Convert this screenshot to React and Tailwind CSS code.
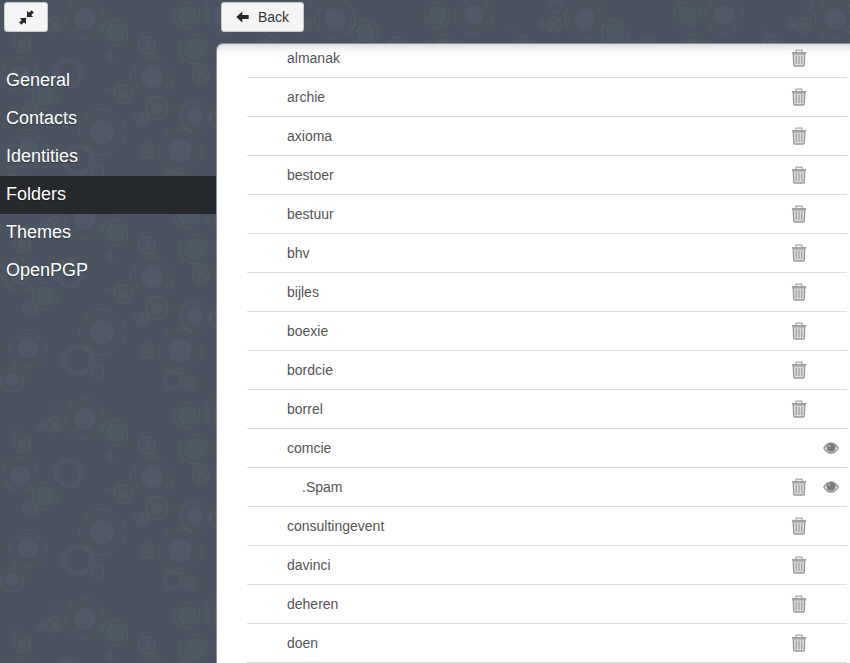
import React from "react";

const folders = [
  { name: "almanak", trash: true },
  { name: "archie", trash: true },
  { name: "axioma", trash: true },
  { name: "bestoer", trash: true },
  { name: "bestuur", trash: true },
  { name: "bhv", trash: true },
  { name: "bijles", trash: true },
  { name: "boexie", trash: true },
  { name: "bordcie", trash: true },
  { name: "borrel", trash: true },
  { name: "comcie", eye: true },
  { name: ".Spam", trash: true, eye: true, child: true },
  { name: "consultingevent", trash: true },
  { name: "davinci", trash: true },
  { name: "deheren", trash: true },
  { name: "doen", trash: true },
];

const nav = ["General", "Contacts", "Identities", "Folders", "Themes", "OpenPGP"];

// [x, y, r, kind] a = target rings with disc, b = thick hollow ring, c = dot, d = disc with ring
const circles = [
  [85, 19, 21, "a"], [115, 33, 14, "d"], [56, 6, 7, "b"], [54, 25, 8, "a"], [42, 25, 4, "c"],
  [14, 31, 4, "b"], [22, 44, 9, "a"], [20, 75, 19, "a"], [69, 73, 15, "b"], [46, 96, 14, "d"],
  [30, 109, 7, "a"], [28, 149, 20, "a"], [12, 179, 13, "a"], [102, 132, 24, "a"], [78, 160, 16, "b"],
  [98, 172, 7, "b"], [147, 45, 9, "a"], [110, 57, 4, "c"], [152, 77, 22, "a"], [123, 94, 10, "a"],
  [107, 90, 3, "c"], [157, 108, 12, "a"], [142, 119, 7, "a"], [195, 116, 16, "a"], [180, 151, 23, "a"],
  [147, 151, 8, "a"], [173, 180, 10, "b"], [190, 184, 7, "a"], [187, 15, 14, "d"], [194, 49, 16, "d"],
  [201, 74, 9, "a"], [224, 15, 20, "a"], [215, 120, 7, "b"],
];

function Circle({ x, y, r, kind }) {
  if (kind === "c") return <circle cx={x} cy={y} r={r} fill="#fff" fillOpacity="0.025" />;
  if (kind === "b")
    return <circle cx={x} cy={y} r={r * 0.84} fill="none" stroke="#fff" strokeOpacity="0.022" strokeWidth={r * 0.3} />;
  if (kind === "d")
    return (
      <g>
        <circle cx={x} cy={y} r={r * 0.68} fill="#fff" fillOpacity="0.028" />
        <circle cx={x} cy={y} r={r * 0.92} fill="none" stroke="#fff" strokeOpacity="0.028" strokeWidth={1.6} />
      </g>
    );
  return (
    <g>
      <circle cx={x} cy={y} r={r * 0.5} fill="#fff" fillOpacity="0.03" />
      <circle cx={x} cy={y} r={r * 0.78} fill="none" stroke="#fff" strokeOpacity="0.018" strokeWidth={1.2} />
      <circle cx={x} cy={y} r={r * 0.95} fill="none" stroke="#fff" strokeOpacity="0.028" strokeWidth={1.6} />
    </g>
  );
}

function Backdrop() {
  const shifts = [[0, 0], [0, 200], [0, -200], [250, 0], [-250, 0]];
  return (
    <svg className="absolute inset-0 w-full h-full" aria-hidden="true">
      <defs>
        <pattern id="tile" width="250" height="200" patternUnits="userSpaceOnUse">
          {shifts.map(([dx, dy]) => (
            <g key={`${dx}_${dy}`} transform={`translate(${dx} ${dy})`}>
              {circles.map(([x, y, r, kind], i) => (
                <Circle key={i} x={x} y={y} r={r} kind={kind} />
              ))}
            </g>
          ))}
        </pattern>
        <pattern id="weave" width="2" height="2" patternUnits="userSpaceOnUse">
          <rect width="1" height="2" fill="#000" fillOpacity="0.03" />
        </pattern>
      </defs>
      <rect width="100%" height="100%" fill="url(#tile)" />
      <rect width="100%" height="100%" fill="url(#weave)" />
    </svg>
  );
}

function Trash() {
  return (
    <svg width="16" height="18" viewBox="0 0 16 18" fill="none" aria-hidden="true">
      <path d="M0.800 3.800h14.400" stroke="#a0a0a0" strokeWidth="1.800" />
      <path d="M5 3V1.200h6V3" stroke="#a8a8a8" strokeWidth="1.200" />
      <path d="M2.200 4.800l.5 11c0 .7.500 1.200 1.100 1.200h8.400c.6 0 1.100-.5 1.100-1.200l.5-11z" fill="#dcdcdc" stroke="#999" strokeWidth="1.300" />
      <path d="M5.300 6.500v8.500M8 6.500v8.500M10.700 6.500v8.500" stroke="#a6a6a6" strokeWidth="1.400" />
    </svg>
  );
}

function Eye() {
  return (
    <svg width="16" height="12" viewBox="0 0 16 12" aria-hidden="true">
      <path d="M0 6c2-3.600 4.800-5.800 8-5.800S14 2.400 16 6c-2 3.600-4.800 5.800-8 5.800S2 9.600 0 6z" fill="#989898" />
      <path d="M1.600 6.200C3.200 8.300 5.400 9.900 8 9.900s4.800-1.600 6.400-3.700c-.6-.8-1.200-1.400-2-2v2c0 2.200-2 3.200-4.400 3.200S3.600 8.400 3.600 6.200v-2c-.8.600-1.400 1.200-2 2z" fill="#e6e6e6" />
      <circle cx="8" cy="5.600" r="4" fill="#7a7a7a" />
      <circle cx="6.400" cy="4" r="1.100" fill="#bdbdbd" />
    </svg>
  );
}

function Compress() {
  return (
    <svg width="15" height="15" viewBox="0 0 15 15" aria-hidden="true">
      <path d="M8 7V0.800L10 2.800 12.600 0.200 14.800 2.400 12.200 5 14.200 7z" fill="#262626" />
      <path d="M7 8v6.200L5 12.200 2.400 14.800 0.200 12.600 2.800 10 0.800 8z" fill="#262626" />
    </svg>
  );
}

function ArrowLeft() {
  return (
    <svg width="13" height="12" viewBox="0 0 13 12" aria-hidden="true">
      <path d="M0.300 6L6.300 0.500V4h6.400v4H6.300v3.500z" fill="#262626" />
    </svg>
  );
}

const btn =
  "flex items-center justify-center h-[30px] rounded-[3px] border border-[#c8c8c8] bg-[#f5f5f5] text-[14px] text-[#333]";

export default function App() {
  return (
    <div className="relative h-[663px] w-full overflow-hidden bg-[#4b5561] font-['Liberation_Sans',Arial,sans-serif]">
      <Backdrop />
      <div className="relative flex h-full">
        <aside className="w-[216px] shrink-0">
          <div className="h-[62px] pt-[2px] pl-1">
            <button className={`${btn} w-[44px]`}>
              <Compress />
            </button>
          </div>
          <nav>
            {nav.map((item) => (
              <div
                key={item}
                className={`h-[38px] pl-[6px] leading-[36px] text-[18px] text-white [text-shadow:0_1px_1px_rgba(0,0,0,0.35)] ${
                  item === "Folders" ? "bg-[#26292e]" : ""
                }`}
              >
                {item}
              </div>
            ))}
          </nav>
        </aside>
        <main className="flex min-w-0 flex-1 flex-col">
          <div className="h-[44px] shrink-0 pt-[2px] pl-[5px]">
            <button className={`${btn} w-[83px] gap-[9px]`}>
              <ArrowLeft />
              <span>Back</span>
            </button>
          </div>
          <section className="ml-px min-h-0 flex-1 overflow-hidden rounded-tl-[6px] bg-white shadow-[0_0_0_1px_rgba(255,255,255,0.35),inset_0_9px_8px_-7px_rgba(0,0,0,0.2)]">
            <ul className="-mt-[5px] ml-[30px] mr-[3px]">
              {folders.map((f) => (
                <li
                  key={f.name}
                  className={`flex h-[39px] items-center border-b border-[#dddddd] pr-2 text-[14px] text-[#555] ${
                    f.child ? "pl-[55px]" : "pl-10"
                  }`}
                >
                  <span className="flex-1">{f.name}</span>
                  <span className="flex w-4 justify-center">{f.trash && <Trash />}</span>
                  <span className="ml-4 flex w-4 justify-center">{f.eye && <Eye />}</span>
                </li>
              ))}
            </ul>
          </section>
        </main>
      </div>
    </div>
  );
}
